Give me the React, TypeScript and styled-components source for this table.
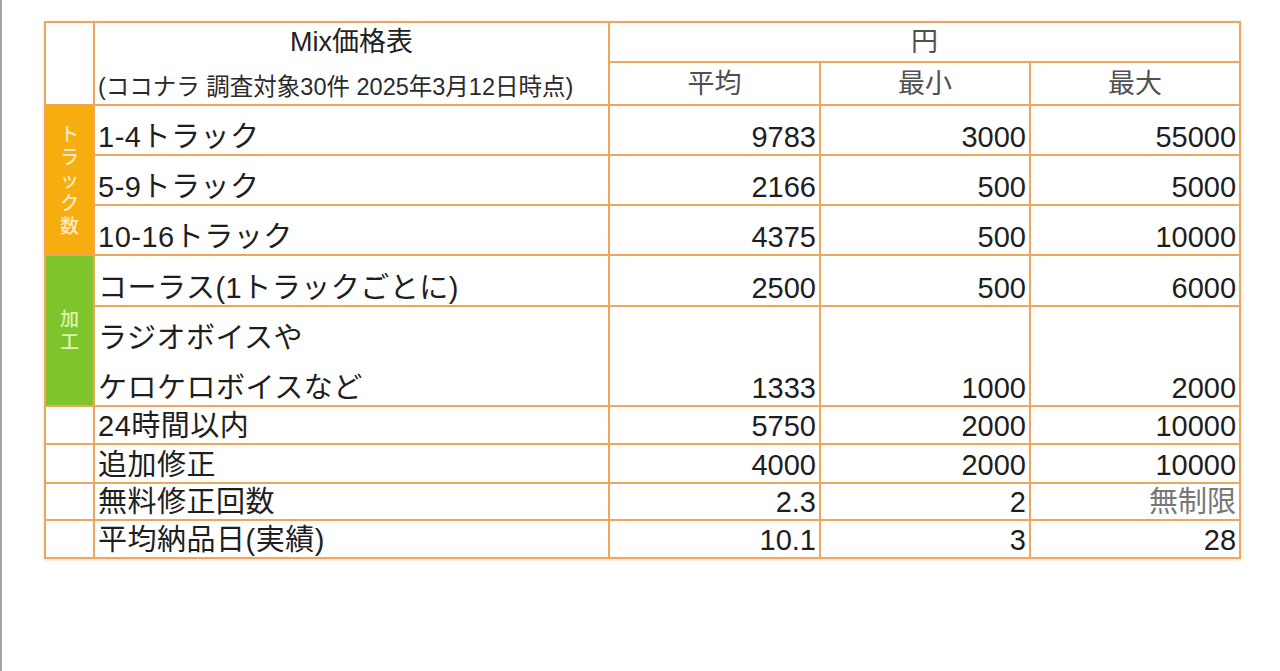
import React from 'react';
import styled, { createGlobalStyle } from 'styled-components';

const GlobalStyle = createGlobalStyle`
  html, body {
    margin: 0;
    padding: 0;
    background: #ffffff;
  }
  body {
    font-family: "Liberation Sans", "Noto Sans CJK JP", sans-serif;
  }
`;

const Page = styled.div`
  min-height: 100vh;
  border-left: 2px solid #a3a3a3;
  padding: 21px 0 0 42px;
  box-sizing: border-box;
`;

const Table = styled.table`
  border-collapse: collapse;
  table-layout: fixed;
  width: 1195px;
  font-family: "Liberation Sans", "Noto Sans CJK JP", sans-serif;
  box-shadow: 0 1px 3px rgba(230, 150, 60, 0.35);
`;

const Row = styled.tr<{ $h: number }>`
  height: ${(p) => p.$h}px;
`;

const Cell = styled.td<{ $align?: 'left' | 'right' | 'center' }>`
  border: 2px solid #eea65a;
  padding: 0 3px 0 3px;
  text-align: ${(p) => p.$align || 'left'};
  vertical-align: bottom;
  font-size: 29px;
  line-height: 34px;
  color: #1e1e1e;
  white-space: nowrap;
  overflow: hidden;
`;

const HeadCell = styled(Cell)`
  font-size: 27px;
  color: #505050;
  vertical-align: middle;
  text-align: center;
`;

const Label = styled(Cell)`
  font-size: 29px;
  letter-spacing: 0.5px;
`;

const Num = styled(Cell)`
  text-align: right;
`;

const Muted = styled.span`
  color: #777777;
`;

const SideCell = styled.td<{ $bg: string; $fg: string }>`
  border: 2px solid #eea65a;
  background: ${(p) => p.$bg};
  color: ${(p) => p.$fg};
  padding: 0;
  text-align: center;
  vertical-align: middle;
  font-size: 19px;
  line-height: 23px;
  font-weight: 500;
`;

const SideChar = styled.div`
  display: block;
`;

const TitleBox = styled.div`
  display: flex;
  flex-direction: column;
  height: 81px;
  justify-content: space-between;
`;

const Title = styled.div`
  text-align: center;
  font-size: 27px;
  line-height: 38px;
  color: #222222;
`;

const Sub = styled.div`
  text-align: left;
  font-size: 23.5px;
  line-height: 34px;
  color: #2a2a2a;
`;

const StackLine = styled.div<{ $gap?: number }>`
  margin-bottom: ${(p) => p.$gap || 0}px;
`;

const cols = [49, 515, 211, 210, 210];

type Item = { label: React.ReactNode; avg: string; min: string; max: React.ReactNode; h: number };

const tracks: Item[] = [
  { label: '1-4トラック', avg: '9783', min: '3000', max: '55000', h: 50 },
  { label: '5-9トラック', avg: '2166', min: '500', max: '5000', h: 50 },
  { label: '10-16トラック', avg: '4375', min: '500', max: '10000', h: 50 },
];

const effects: Item[] = [
  { label: 'コーラス(1トラックごとに)', avg: '2500', min: '500', max: '6000', h: 51 },
  {
    label: (
      <>
        <StackLine $gap={16}>ラジオボイスや</StackLine>
        <StackLine>ケロケロボイスなど</StackLine>
      </>
    ),
    avg: '1333',
    min: '1000',
    max: '2000',
    h: 100,
  },
];

const others: Item[] = [
  { label: '24時間以内', avg: '5750', min: '2000', max: '10000', h: 38 },
  { label: '追加修正', avg: '4000', min: '2000', max: '10000', h: 39 },
  { label: '無料修正回数', avg: '2.3', min: '2', max: <Muted>無制限</Muted>, h: 37 },
  { label: '平均納品日(実績)', avg: '10.1', min: '3', max: '28', h: 38 },
];

const Side: React.FC<{ text: string; span: number; bg: string; fg: string }> = ({ text, span, bg, fg }) => (
  <SideCell rowSpan={span} $bg={bg} $fg={fg}>
    {text.split('').map((c, i) => (
      <SideChar key={i}>{c}</SideChar>
    ))}
  </SideCell>
);

const Values: React.FC<{ item: Item }> = ({ item }) => (
  <>
    <Label>{item.label}</Label>
    <Num>{item.avg}</Num>
    <Num>{item.min}</Num>
    <Num>{item.max}</Num>
  </>
);

export default function App() {
  return (
    <>
      <GlobalStyle />
      <Page>
        <Table>
          <colgroup>
            {cols.map((w, i) => (
              <col key={i} style={{ width: w }} />
            ))}
          </colgroup>
          <tbody>
            <Row $h={40}>
              <Cell rowSpan={2} />
              <Cell rowSpan={2}>
                <TitleBox>
                  <Title>Mix価格表</Title>
                  <Sub>(ココナラ 調査対象30件 2025年3月12日時点)</Sub>
                </TitleBox>
              </Cell>
              <HeadCell colSpan={3}>円</HeadCell>
            </Row>
            <Row $h={43}>
              <HeadCell>平均</HeadCell>
              <HeadCell>最小</HeadCell>
              <HeadCell>最大</HeadCell>
            </Row>
            {tracks.map((t, i) => (
              <Row key={`t${i}`} $h={t.h}>
                {i === 0 && <Side text="トラック数" span={3} bg="#f6ae0f" fg="#fde9c4" />}
                <Values item={t} />
              </Row>
            ))}
            {effects.map((t, i) => (
              <Row key={`e${i}`} $h={t.h}>
                {i === 0 && <Side text="加工" span={2} bg="#7ec52c" fg="#dcf5b0" />}
                <Values item={t} />
              </Row>
            ))}
            {others.map((t, i) => (
              <Row key={`o${i}`} $h={t.h}>
                <Cell />
                <Values item={t} />
              </Row>
            ))}
          </tbody>
        </Table>
      </Page>
    </>
  );
}
